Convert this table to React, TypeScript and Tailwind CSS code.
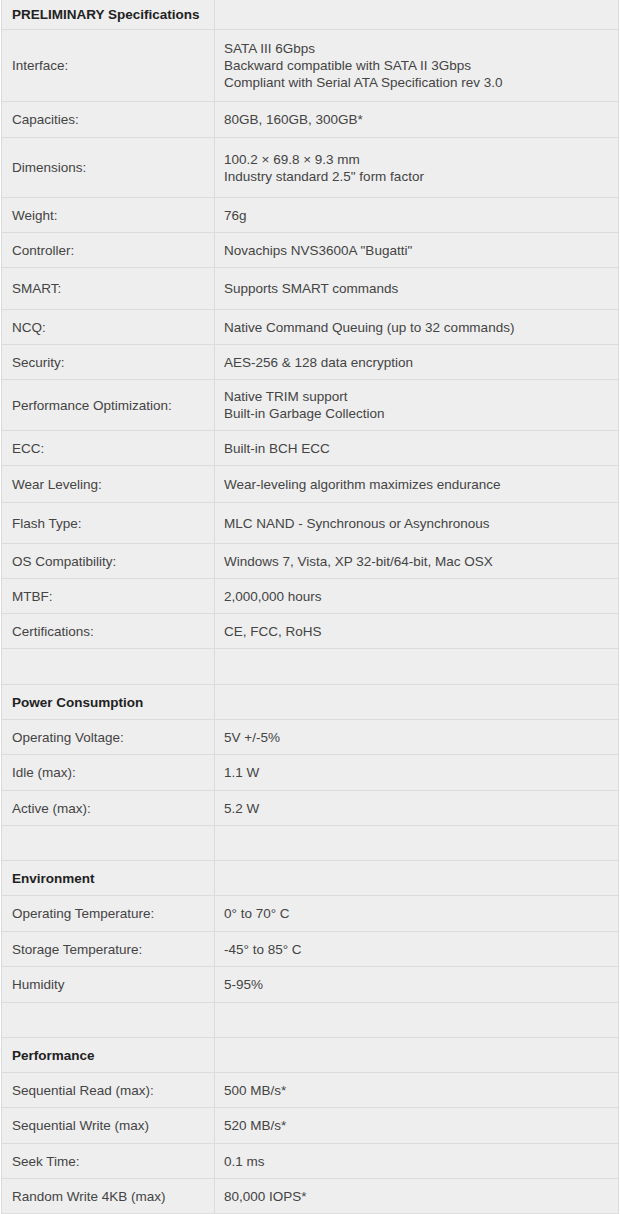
type Row = {
  label: string
  value?: string[]
  h: string
  bold?: boolean
}

const rows: Row[] = [
  { label: 'PRELIMINARY Specifications', h: 'h-[30px]', bold: true },
  {
    label: 'Interface:',
    value: [
      'SATA III 6Gbps',
      'Backward compatible with SATA II 3Gbps',
      'Compliant with Serial ATA Specification rev 3.0',
    ],
    h: 'h-[72px]',
  },
  { label: 'Capacities:', value: ['80GB, 160GB, 300GB*'], h: 'h-[36px]' },
  {
    label: 'Dimensions:',
    value: ['100.2 × 69.8 × 9.3 mm', 'Industry standard 2.5" form factor'],
    h: 'h-[60px]',
  },
  { label: 'Weight:', value: ['76g'], h: 'h-[35px]' },
  { label: 'Controller:', value: ['Novachips NVS3600A "Bugatti"'], h: 'h-[35px]' },
  { label: 'SMART:', value: ['Supports SMART commands'], h: 'h-[42px]' },
  { label: 'NCQ:', value: ['Native Command Queuing (up to 32 commands)'], h: 'h-[35px]' },
  { label: 'Security:', value: ['AES-256 & 128 data encryption'], h: 'h-[35px]' },
  {
    label: 'Performance Optimization:',
    value: ['Native TRIM support', 'Built-in Garbage Collection'],
    h: 'h-[51px]',
  },
  { label: 'ECC:', value: ['Built-in BCH ECC'], h: 'h-[35px]' },
  { label: 'Wear Leveling:', value: ['Wear-leveling algorithm maximizes endurance'], h: 'h-[37px]' },
  { label: 'Flash Type:', value: ['MLC NAND - Synchronous or Asynchronous'], h: 'h-[41px]' },
  { label: 'OS Compatibility:', value: ['Windows 7, Vista, XP 32-bit/64-bit, Mac OSX'], h: 'h-[35px]' },
  { label: 'MTBF:', value: ['2,000,000 hours'], h: 'h-[35px]' },
  { label: 'Certifications:', value: ['CE, FCC, RoHS'], h: 'h-[35px]' },
  { label: '', h: 'h-[36px]' },
  { label: 'Power Consumption', h: 'h-[35px]', bold: true },
  { label: 'Operating Voltage:', value: ['5V +/-5%'], h: 'h-[35px]' },
  { label: 'Idle (max):', value: ['1.1 W'], h: 'h-[36px]' },
  { label: 'Active (max):', value: ['5.2 W'], h: 'h-[35px]' },
  { label: '', h: 'h-[35px]' },
  { label: 'Environment', h: 'h-[35px]', bold: true },
  { label: 'Operating Temperature:', value: ['0° to 70° C'], h: 'h-[36px]' },
  { label: 'Storage Temperature:', value: ['-45° to 85° C'], h: 'h-[35px]' },
  { label: 'Humidity', value: ['5-95%'], h: 'h-[36px]' },
  { label: '', h: 'h-[35px]' },
  { label: 'Performance', h: 'h-[35px]', bold: true },
  { label: 'Sequential Read (max):', value: ['500 MB/s*'], h: 'h-[35px]' },
  { label: 'Sequential Write (max)', value: ['520 MB/s*'], h: 'h-[36px]' },
  { label: 'Seek Time:', value: ['0.1 ms'], h: 'h-[35px]' },
  { label: 'Random Write 4KB (max)', value: ['80,000 IOPS*'], h: 'h-[35px]' },
]

export default function App() {
  return (
    <div className="w-[620px] bg-white font-['Liberation_Sans',Arial,sans-serif] text-[13.5px] leading-[17px] text-[#444444]">
      <div className="ml-px w-[618px] border-x border-[#dcdcdc] bg-[#eeeeee]">
        {rows.map((row, i) => (
          <div
            key={i}
            className={`grid grid-cols-[213px_1fr] border-b border-[#dcdcdc] ${row.h}`}
          >
            <div
              className={`flex items-center border-r border-[#dcdcdc] pl-[10px] ${
                row.bold ? 'font-bold text-[#222222]' : ''
              }`}
            >
              {row.label}
            </div>
            <div className="flex flex-col justify-center pl-[9px]">
              {row.value?.map(line => (
                <span key={line}>{line}</span>
              ))}
            </div>
          </div>
        ))}
      </div>
    </div>
  )
}
